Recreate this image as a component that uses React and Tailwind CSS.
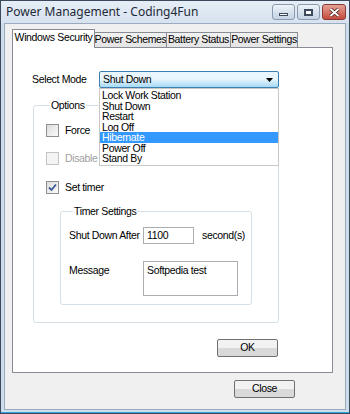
import React from 'react';

const modes = ['Lock Work Station', 'Shut Down', 'Restart', 'Log Off', 'Hibernate', 'Power Off', 'Stand By'];
const tabs = ['Power Schemes', 'Battery Status', 'Power Settings'];

const CheckBox = ({ checked, disabled }) => (
  <span
    className={`flex h-[13px] w-[13px] shrink-0 items-center justify-center border ${
      disabled ? 'border-[#c4c4c4] bg-[#f4f4f4]' : 'border-[#8e8f8f] bg-gradient-to-br from-[#dcdcdc] to-[#fbfbfb]'
    }`}
  >
    {checked && (
      <svg width="9" height="9" viewBox="0 0 9 9">
        <path d="M1 4.5 L3.5 7 L8 1.5" fill="none" stroke="#3a5a9a" strokeWidth="1.8" />
      </svg>
    )}
  </span>
);

const TitleButton = ({ kind }) => {
  const close = kind === 'close';
  return (
    <div
      className={`flex h-[16px] items-center justify-center rounded-[3px] border ${
        close
          ? 'w-[24px] border-[#8a3a36] bg-gradient-to-b from-[#e3a195] to-[#c44b3b]'
          : 'w-[23px] border-[#8a9bb0] bg-gradient-to-b from-[#eef3f9] to-[#c3d2e4]'
      }`}
    >
      {kind === 'min' && <span className="mt-[5px] h-[3px] w-[9px] border border-[#3d4a5c] bg-white" />}
      {kind === 'max' && <span className="h-[7px] w-[9px] border-2 border-[#3d4a5c] bg-white" />}
      {close && (
        <svg width="11" height="9" viewBox="0 0 11 9">
          <path d="M1.5 1 L9.5 8 M9.5 1 L1.5 8" stroke="#4a1c18" strokeWidth="3.4" />
          <path d="M1.5 1 L9.5 8 M9.5 1 L1.5 8" stroke="#ffffff" strokeWidth="1.8" />
        </svg>
      )}
    </div>
  );
};

const Button = ({ children }) => (
  <div className="flex h-[18px] w-[61px] items-center justify-center rounded-[2px] border border-[#707070] bg-gradient-to-b from-[#f2f2f2] from-50% to-[#d9d9d9] to-50%">
    {children}
  </div>
);

export default function App() {
  return (
    <div className="flex h-[414px] w-[350px] flex-col whitespace-nowrap border border-[#3b4a5a] bg-[#cfdcec] font-['Liberation_Sans',sans-serif] text-[10.5px] tracking-[-0.35px] text-black">
      {/* Title bar */}
      <div className="flex h-[22px] items-center justify-between bg-gradient-to-b from-[#e6edf6] to-[#d7e2ef] pl-[5px] pr-[3px]">
        <span className="font-['Noto_Sans',sans-serif] text-[12px] tracking-normal text-[#1e2a38]">Power Management - Coding4Fun</span>
        <div className="flex gap-[2px]">
          <TitleButton kind="min" />
          <TitleButton kind="max" />
          <TitleButton kind="close" />
        </div>
      </div>

      {/* Client area */}
      <div className="mx-[3px] flex flex-1 flex-col border border-[#9aabc0] bg-[#f0f0f0] pl-[7px] pr-[11px] pt-[5px]">
        {/* Tabs */}
        <div className="flex items-end">
          <div className="relative z-10 -mb-px flex h-[19px] w-[83px] items-center justify-center border border-b-0 border-[#898c95] bg-white pb-[2px]">
            Windows Security
          </div>
          {tabs.map((t, i) => (
            <div
              key={t}
              className={`flex h-[15px] items-center justify-center border border-b-0 border-[#898c95] bg-gradient-to-b from-[#f2f2f2] to-[#e3e3e3] ${
                i === 0 ? 'w-[72px] border-l-0' : i === 1 ? 'w-[65px] -ml-px' : 'w-[68px] -ml-px'
              }`}
            >
              {t}
            </div>
          ))}
        </div>

        {/* Tab panel */}
        <div className="flex h-[326px] w-[321px] flex-col border border-[#898c95] bg-white pl-[19px] pt-[23px]">
          <div className="flex items-center">
            <span className="w-[67px]">Select Mode</span>
            <div className="relative">
              <div className="flex h-[17px] w-[180px] items-center justify-between rounded-[2px] border border-[#3c7fb1] bg-gradient-to-b from-[#eaf6fd] from-45% to-[#a7d9f5] pl-[3px] pr-[5px]">
                <span>Shut Down</span>
                <svg width="7" height="4" viewBox="0 0 7 4">
                  <path d="M0 0 H7 L3.5 4 Z" fill="#000" />
                </svg>
              </div>
              <div className="absolute left-0 top-[17px] z-20 flex w-[180px] flex-col border border-[#c8c8c8] bg-white py-px">
                {modes.map((m) => (
                  <div
                    key={m}
                    className={`h-[10.5px] pl-[2px] leading-[11px] ${m === 'Hibernate' ? 'bg-[#3399ff] text-white' : ''}`}
                  >
                    {m}
                  </div>
                ))}
              </div>
            </div>
          </div>

          {/* Options */}
          <fieldset className="ml-[1px] mt-[11px] h-[224px] w-[246px] rounded-[3px] border border-[#d5dfe5] pl-[12px] pt-[12px]">
            <legend className="ml-[4px] px-[1px] leading-[12px]">Options</legend>
            <div className="flex flex-col">
              <label className="flex items-center gap-[6px]">
                <CheckBox />
                <span>Force</span>
              </label>
              <label className="mt-[12px] flex items-center gap-[6px] text-[#a0a0a0]">
                <CheckBox disabled />
                <span>Disable w</span>
              </label>
              <label className="mt-[13px] flex items-center gap-[6px]">
                <CheckBox checked />
                <span>Set timer</span>
              </label>
            </div>

            {/* Timer settings */}
            <fieldset className="ml-[14px] mt-[10px] h-[100px] w-[192px] rounded-[3px] border border-[#d5dfe5] pl-[8px] pt-[10px]">
              <legend className="ml-[4px] px-[1px] leading-[12px]">Timer Settings</legend>
              <div className="flex items-center">
                <span className="w-[74px]">Shut Down After</span>
                <div className="flex h-[17px] w-[51px] items-center border border-[#abadb3] pl-[3px]">1100</div>
                <span className="ml-[8px]">second(s)</span>
              </div>
              <div className="mt-[17px] flex items-start">
                <span className="mt-[2px] w-[74px]">Message</span>
                <div className="h-[35px] w-[95px] border border-[#abadb3] pl-[3px] pt-[1px]">Softpedia test</div>
              </div>
            </fieldset>
          </fieldset>

          <div className="ml-[185px] mt-[16px]">
            <Button>OK</Button>
          </div>
        </div>

        <div className="ml-[222px] mt-[7px]">
          <Button>Close</Button>
        </div>
      </div>

      <div className="h-[3px] border-b border-[#2fa6dc]" />
    </div>
  );
}
